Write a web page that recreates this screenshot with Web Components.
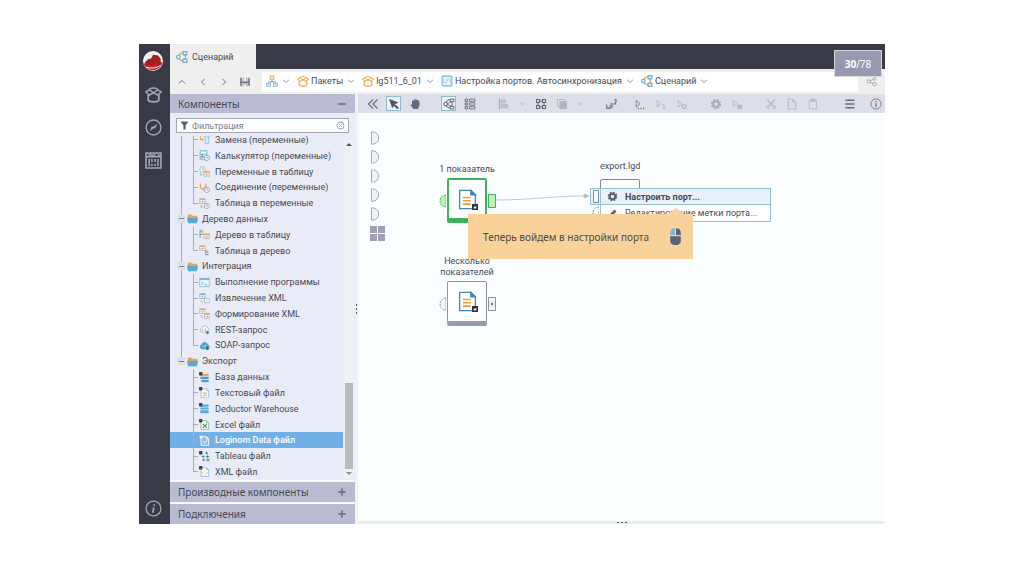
<!DOCTYPE html>
<html lang="ru">
<head>
<meta charset="utf-8">
<title>Сценарий</title>
<style>
  body { margin: 0; background: #fff; color: #484a52; font: 9px/12px Roboto, "Noto Sans", sans-serif; }
</style>
</head>
<body>
<scenario-app></scenario-app>
<script>
const BASE = `<style>
  * { box-sizing: border-box; }
  button { font: inherit; color: inherit; background: none; border: 0; padding: 0; margin: 0; display: grid; place-items: center; }
  a { color: inherit; text-decoration: none; }
</style>`;
function define(name, html, setup) {
  const tpl = document.createElement('template');
  tpl.innerHTML = BASE + html;
  customElements.define(name, class extends HTMLElement {
    static get observedAttributes() { return ['name']; }
    connectedCallback() {
      if (this.shadowRoot) return;
      this.attachShadow({ mode: 'open' }).append(tpl.content.cloneNode(true));
      if (setup) setup(this, this.shadowRoot);
    }
    attributeChangedCallback() {
      if (this.shadowRoot && setup) setup(this, this.shadowRoot);
    }
  });
}

/* ---------- icons, all on a 16 x 16 grid ---------- */
const B = '#6fb3dc', O = '#f0a54b', G = '#7d808c';
const clock = `<circle cx="11.500" cy="11.500" r="3.800" fill="#eef3fa" stroke="#7f93a8"/><path d="M11.500 9.500v2h1.500" stroke="#7f93a8"/>`;
const dot = `<rect x="0" y="0" width="5" height="5" rx="1" fill="#3f434d" stroke="none"/>`;
const doc = c => `<path d="M3 2.500h8l3 3v9.500H3z" fill="#fff" stroke="${c}"/><path d="M11 2.500v3h3" stroke="${c}"/>`;
const table = (x, y, c) => `<path d="M${x} ${y}h8v7h-8z" fill="#fff" stroke="#a9adb6"/><path d="M${x} ${y + 1}h8" stroke="${c}" stroke-width="2"/><path d="M${x} ${y + 4.5}h8M${x + 4} ${y + 2}v5" stroke="#a9adb6"/>`;
const play = '<path d="M3 3v9l5-4.500z"/>';
const ICONS = {
  up: '<path d="M3 10.500l5-5 5 5" stroke-width="1.600"/>',
  left: '<path d="M10.500 3l-5 5 5 5" stroke-width="1.600"/>',
  right: '<path d="M5.500 3l5 5-5 5" stroke-width="1.600"/>',
  down: '<path d="M2 5.500l6 5 6-5" stroke-width="1.800"/>',
  dleft: '<path d="M8 2L2 8l6 6M14 2L8 8l6 6" stroke-width="1.500"/>',
  save: '<path d="M1.500 1v13.500M14.500 1v13.500" stroke-width="2.400"/><path d="M1.500 8.500h13" stroke-width="2.600"/><path d="M5 1v6M11 1v6M4.500 15v-4h7v4" stroke-width="1"/>',
  tree: `<path d="M8 6v3M3.500 11V9h9v2" stroke="${G}"/><rect x="5.500" y="1" width="5" height="5" fill="#fbe2bd" stroke="${O}"/><rect x="1" y="11" width="5" height="4" fill="#cfe7f6" stroke="${B}"/><rect x="10" y="11" width="5" height="4" fill="#cfe7f6" stroke="${B}"/>`,
  pack: `<path d="M3 8.500v5c2 2 8 2 10 0v-5" stroke-width="1.700"/><path d="M8 6.500L4 3.500 .8 5.500 4 8.500zM8 6.500l4-3 3.200 2L12 8.500z" stroke-width="1.400"/><path d="M4 3c2-1.500 6-1.500 8 0" stroke-width="1.200"/>`,
  module: `<rect x="1.500" y="1.500" width="13" height="13" rx="2" fill="#eef7fc" stroke="${B}" stroke-width="1.500"/><path d="M10 4l-4 8M4 5v6M12 5v6" stroke="${B}"/>`,
  flow: `<path d="M4 6c1-3 3-3.500 5.500-3.500" stroke="${O}" stroke-width="1.700"/><path d="M4 10c1 2.500 3 3 5.500 3M12.500 5v6" stroke="${O}" stroke-width="1.700"/><circle cx="3.200" cy="8" r="2.300" fill="#fff" stroke="${B}" stroke-width="1.700"/><path d="M9.500 1h5v4h-5z" fill="#fff" stroke="${B}" stroke-width="1.700"/><path d="M9.500 11h5v4h-5z" fill="#fff" stroke="${B}" stroke-width="1.700"/>`,
  share: '<circle cx="4" cy="8" r="2.500"/><circle cx="12.500" cy="4" r="2"/><circle cx="12.500" cy="12" r="2.500"/><path d="M6 7l4.500-2M6 9l4.500 2"/>',
  compass: '<circle cx="8" cy="8" r="7" stroke-width="1.300"/><path d="M11.500 4.500l-2 5-2-2zM4.500 11.500l2-5 2 2z" fill="currentColor" stroke="none"/>',
  calc: '<path d="M1 1h14v14H1zM1 4.500h14" stroke-width="1.500"/><path d="M3 2.800h7M12 2.800h2M4 6.500v7M6.500 6.500v3M6.500 11v2.500M9.500 6.500v3M9.500 11v2.500M12.200 6.500v7" stroke-width="1.500"/>',
  info: '<circle cx="8" cy="8" r="7" stroke-width="1.200"/><path d="M8.800 4l-.3 1.500M8.300 7l-.9 5" stroke-width="1.700"/>',
  logo: '<circle cx="8" cy="8" r="8" fill="#f4f1f1" stroke="none"/><path d="M.3 10l15.400-1A8 8 0 0 1 .3 10z" fill="#c6282c" stroke="none"/><path d="M1.500 9L4 6.500 6.500 6 8 3l4 .5L14 6l.5 5-2.500 1-1-1.500-3 .5-1 1-2-1.500L2.500 12z" fill="#a81d22" stroke="none"/><path d="M2.500 13c4 1 8 1 11.500-1.500" stroke="#fff" stroke-width=".7"/>',
  pointer: '<path d="M2 2l11 4-4.500 2L14 13l-1.500 1.500L7.500 9.500 6 13z" fill="currentColor"/>',
  hand: '<path d="M4 8V4l1.500-1L7 4V2l1.500-.5L10 2.500l1.500-.5 1 1.500L14 5v5l-2 4.500H6L2 9.500z" fill="currentColor" stroke="none"/>',
  flowg: '<circle cx="3.500" cy="8" r="2.500" stroke-width="1.300"/><path d="M9.500 1.500h5V5h-5zM9.500 11h5v3.500h-5zM4.500 5.500c1-3 3-3.500 5-3M4.500 10.500c1 2.500 3 2.500 5 2.500M12 5v6M6 8c2-1 3-3 5-3M6 8c2 1 3 3 5 3" stroke-width="1.200"/>',
  list: '<path d="M1.500 1.500h3v3h-3zM7 1.500h7.500v3H7zM1.500 6.500h3v3h-3zM7 6.500h7.500v3H7zM1.500 11.500h3v3h-3zM7 11.500h7.500v3H7z" stroke-width="1.200"/>',
  align: '<path d="M2 1v14" stroke-width="1.500"/><path d="M4 2.500h6v4H4zM4 9h9v4H4z" fill="currentColor" fill-opacity=".4"/>',
  grid4: '<path d="M2 2h4v4H2zM10 2h4v4h-4zM2 10h4v4H2zM10 10h4v4h-4zM6 4h4M6 12h4M4 6v4M12 6v4" stroke-width="1.500"/>',
  layers: '<path d="M2 2h9v9H2z"/><path d="M5 5h9v9H5z" fill="currentColor" fill-opacity=".8"/>',
  sort: '<path d="M1 9v4.500h4.500V9M8 7v6.500M6.500 8L8 7M11 2.500h2.500V5L11 8h3" stroke-width="1.400"/>',
  run: play + '<path d="M5 14h1.500M8.500 14H10M12 14h1.500" stroke-width="1.800"/>',
  run1: play + '<path d="M10 9.500l2-1V14M10 14h4"/>',
  run2: play + '<circle cx="11" cy="11.500" r="2.500" stroke-width="1.500"/>',
  run3: play + '<path d="M9 10h5v4H9z" fill="currentColor" fill-opacity=".6"/>',
  gear: '<circle cx="8" cy="8" r="6" stroke-width="2" stroke-dasharray="2.700 2" /><circle cx="8" cy="8" r="4" stroke-width="3"/>',
  cut: '<path d="M3 2l8 9M13 2L5 11" stroke-width="1.400"/><circle cx="3.800" cy="12" r="2"/><circle cx="12.200" cy="12" r="2"/>',
  copy: '<path d="M3 1.500h6l4 4v9H3zM9 1.500v4h4"/>',
  paste: '<path d="M3 3h9.500v11.500H3zM5.500 1.500H10v3H5.500z"/>',
  menu: '<path d="M2 3h12M2 8h12M2 13h12" stroke-width="2"/>',
  infot: '<circle cx="8" cy="8" r="6.800"/><path d="M8 4v1.600M8 7v5" stroke-width="1.600"/>',
  filter: '<path d="M1 1h14L10 7.500V15H6V7.500z" fill="currentColor" stroke="none"/>',
  clear: '<circle cx="8" cy="8" r="6" stroke-width="1.800"/><path d="M5.500 5.500l5 5M10.500 5.500l-5 5" stroke-width="1.500"/>',
  minus: '<path d="M2 8h12" stroke-width="2.400"/>',
  plus: '<path d="M2 8h12M8 2v12" stroke-width="2.200"/>',
  folder: `<path d="M1 2h5l2 2h7v7H1z" fill="${O}" stroke="none"/><path d="M0 7h16l-1.500 8h-13z" fill="#5aa9dd" stroke="none"/>`,
  replace: `<path d="M2 3v5h4M4 6l2 2-2 2" stroke="${O}" stroke-width="1.500"/><path d="M8 3h7l-1.500 4v7H9V7z" fill="#dcebf7" stroke="${B}"/>`,
  calcv: `<path d="M1.500 1h10v13h-10z" fill="#b9dcee" stroke="${B}"/><path d="M3 3.500h7" stroke="#fff" stroke-width="2"/><path d="M3 7h3M3 10h3" stroke="#68798a" stroke-width="1.500"/>${clock}`,
  var2t: `<circle cx="5" cy="5" r="4" fill="#eef3fa" stroke="#8fb3cc"/><path d="M5 3v2h2" stroke="#8fb3cc"/>${table(7, 8, O)}<path d="M2 10v3h3" stroke="${B}"/>`,
  join: `<path d="M2 2v6l4 3h3M10 2v4L7 9" stroke="${O}" stroke-width="2"/>${clock}`,
  t2var: table(1, 1, O) + `<path d="M3 10v3h3" stroke="${O}" stroke-width="1.500"/>` + clock,
  tree2t: `<path d="M1.500 1v12M1.500 3h4M1.500 8h4" stroke="#8a95a0" stroke-width="1.500"/><path d="M5 2v4" stroke="#78b887" stroke-width="2"/>${table(7, 7, O)}`,
  t2tree: table(1, 1, O) + '<path d="M10 7v8M10 10h4M10 14h4" stroke="#8a95a0" stroke-width="1.500"/>',
  exec: `<path d="M1 2h14v12H1z" fill="#eaf4fb" stroke="${B}"/><path d="M1 3h14" stroke="${B}" stroke-width="2.500"/><path d="M4 7l2 2-2 2M8 11.500h4" stroke="#6d8496"/>`,
  xmlout: `${table(1, 1, B)}<path d="M8 8h7v6H8z" fill="#fff" stroke="${B}"/><path d="M3 10v3h3" stroke="${O}"/><path d="M10 11h3" stroke="${O}"/>`,
  xmlin: `${table(1, 1, O)}${table(8, 8, O)}<path d="M3 10v3h3" stroke="${B}"/>`,
  rest: `<path d="M4 12a3.500 3.500 0 0 1 0-6.500 4.500 4.500 0 0 1 8.500 0 3.500 3.500 0 0 1 0 6.500z" fill="#f4f8fb" stroke="#8ba9bd"/><path d="M6 7c-1 1-1 2 0 3.500M9.500 6v5" stroke="${O}" stroke-width="1.500"/><path d="M11 9v6l4-2z" fill="#4c5666" stroke="none"/>`,
  soap: `<path d="M4 13a3.500 3.500 0 0 1 0-6.500 4.500 4.500 0 0 1 8.500 0 3.500 3.500 0 0 1 0 6.500z" fill="#4d9ed2" stroke="#4d9ed2"/><path d="M5 10l2-2M8 11l2-4" stroke="#fff"/><path d="M11 9v6l4-2z" fill="#35516c" stroke="none"/>`,
  db: `<path d="M2 2.500h12v3.500H2z" fill="${O}" stroke="none"/><path d="M2 7h12v3.500H2zM3 11.500h11V15H4z" fill="#4f9fd6" stroke="none"/>${dot}`,
  txt: doc(B) + `<path d="M5.500 9h6M5.500 12h6" stroke="${O}" stroke-width="1.800"/>` + dot,
  dw: `<path d="M2 2h12v3.500H2zM2 6.500h12v3H2zM2 10.500h12V15H2z" fill="#58a9dd" stroke="none"/>${dot}`,
  xls: doc('#69b07f') + '<path d="M5.500 7l6 6M11.500 7l-6 6" stroke="#2f9a53" stroke-width="1.600"/>' + dot,
  lgd: '<path d="M3 2.500h8l3 3v9.500H3zM11 2.500v3h3" fill="#8cc0ea" stroke="#fff" stroke-width="1.300"/><path d="M6 9l2 3 4-5" stroke="#fff" stroke-width="1.300"/><path d="M1 1h4v4H1z" fill="#fff" stroke="none"/>',
  tableau: `<path d="M4 8h4M6 6v4M9 3h4M11 1v4M10 8h5M12.500 6v4M5 13h4M7 11v4" stroke="#4f86a8" stroke-width="1.500"/><path d="M11 11h4v4h-4z" fill="#65a98a" stroke="none"/>${dot}`,
  xml: doc(B) + `<path d="M7 8l-2 2 2 2M10 8l2 2-2 2" stroke="${O}" stroke-width="1.400"/>` + dot,
  nodedoc: '<path d="M2 1h8.500L14 4.500V15H2z" fill="#fff" stroke="#3f86c4" stroke-width="1"/><path d="M10.500 1v3.500H14z" fill="#3f86c4" stroke="#3f86c4"/><path d="M4.500 6.500h6M4.500 9h6M4.500 11.500h6" stroke="#f09a36" stroke-width="1.200"/>',
  mark: '<path d="M0 0h16v16H0z" fill="#2c3440" stroke="none"/><path d="M4.500 8v4h7V5z" fill="#e8ecf0" stroke="none"/>',
  pencil: '<path d="M2 14l2-5 7-7 3 3-7 7z" fill="currentColor" stroke="none"/>',
  mouse: '<path d="M7.400 0v6.500H3V5a5 5 0 0 1 4.400-5z" fill="#7fb6d8" stroke="none"/><path d="M8.600 0A5 5 0 0 1 13 5v1.500H8.600zM3 7.700h10V12a4 4 0 0 1-4 4H7a4 4 0 0 1-4-4z" fill="#5d6176" stroke="none"/>'
};
define('ui-icon', `<style>:host { display: inline-block; width: 11px; height: 11px; flex: none; } svg { display: block; width: 100%; height: 100%; }</style>
  <svg viewBox="0 0 16 16" fill="none" stroke="currentColor" aria-hidden="true"></svg>`,
  (el, root) => { root.querySelector('svg').innerHTML = ICONS[el.getAttribute('name')] || ''; });

/* ---------- left rail ---------- */
define('side-rail', `<style>
  :host { display: flex; flex-direction: column; align-items: center; gap: 13px; padding: 7px 3px 6px 0; background: #383a45; color: #a3a6b2; }
  button { width: 20px; height: 20px; }
  ui-icon { width: 17px; height: 17px; }
  .logo { width: 20px; height: 20px; }
  .last { margin-top: auto; }
</style>
<button aria-label="Меню"><ui-icon class="logo" name="logo"></ui-icon></button>
<button aria-label="Пакеты"><ui-icon name="pack"></ui-icon></button>
<button aria-label="Навигация"><ui-icon name="compass"></ui-icon></button>
<button aria-label="Процессы"><ui-icon name="calc"></ui-icon></button>
<button class="last" aria-label="О программе"><ui-icon name="info"></ui-icon></button>`);

/* ---------- tab strip ---------- */
define('tab-strip', `<style>
  :host { display: flex; height: 25px; background: #383a45; font: 9px/12px Roboto, "Noto Sans", sans-serif; }
  button { display: flex; align-items: center; gap: 4px; width: 86px; padding-left: 6px; background: #efeff0; }
  ui-icon { width: 12px; height: 12px; }
</style><button><ui-icon name="flow"></ui-icon>Сценарий</button>`);

/* ---------- breadcrumbs ---------- */
define('crumb-item', `<style>
  :host { display: flex; align-items: center; gap: 4px; color: #484a52; }
  .chev { width: 8px; height: 8px; color: #8a8d96; }
  a { display: flex; align-items: center; gap: 2px; white-space: nowrap; }
  .ic { width: 12px; height: 12px; color: #f0a54b; }
</style><a href="#"><ui-icon class="ic"></ui-icon><slot></slot></a><ui-icon class="chev" name="down"></ui-icon>`,
  (el, root) => root.querySelector('.ic').setAttribute('name', el.getAttribute('icon')));
define('crumb-bar', `<style>
  :host { display: flex; align-items: center; height: 25px; background: #efeff0; color: #70737d; }
  .nav { display: flex; gap: 10px; padding-left: 6px; width: 92px; }
  .nav ui-icon { width: 10px; height: 10px; }
  .nav button { height: 12px; width: 11px; }
  nav { flex: 1; min-width: 0; display: flex; align-items: center; gap: 7px; height: 20px; padding: 0 0 2px 4px; background: #fff; }
  .share { width: 27px; color: #8f929c; }
</style>
<div class="nav"><button aria-label="Вверх"><ui-icon name="up"></ui-icon></button><button aria-label="Назад"><ui-icon name="left"></ui-icon></button><button aria-label="Вперёд"><ui-icon name="right"></ui-icon></button><button aria-label="Сохранить"><ui-icon name="save"></ui-icon></button></div>
<nav><crumb-item icon="tree"></crumb-item><crumb-item icon="pack">Пакеты</crumb-item><crumb-item icon="pack">lg511_6_01</crumb-item><crumb-item icon="module">Настройка портов. Автосинхронизация</crumb-item><crumb-item icon="flow">Сценарий</crumb-item></nav>
<button class="share" aria-label="Поделиться"><ui-icon name="share"></ui-icon></button>`);

/* ---------- component tree ---------- */
define('tree-group', `<style>
  :host { flex: 1; min-height: 0; display: flex; align-items: center; padding-left: 7px; white-space: nowrap;
    background: linear-gradient(#a9adb8, #a9adb8) 11px 0 / 1px var(--line, 100%) no-repeat; }
  .box { width: 8px; height: 8px; background: #dde0ea; color: #7d818d; margin-right: 2px; }
  .box ui-icon { width: 7px; height: 7px; }
  .folder { margin-right: 4px; }
</style><button class="box" aria-label="Свернуть"><ui-icon name="minus"></ui-icon></button><ui-icon class="folder" name="folder"></ui-icon><slot></slot>`);
define('tree-leaf', `<style>
  :host { flex: 1; min-height: 0; display: flex; align-items: center; gap: 5px; padding-left: 29px; white-space: nowrap;
    background: linear-gradient(#a9adb8, #a9adb8) 11px 0 / var(--outer, 1px) 100% no-repeat,
      linear-gradient(#a9adb8, #a9adb8) 23px 0 / 1px var(--line, 100%) no-repeat,
      linear-gradient(#a9adb8, #a9adb8) 23px 50% / 5px 1px no-repeat, var(--row, transparent); }
  :host([last]) { --line: 50%; }
  :host([tail]) { --outer: 0; }
  :host([selected]) { --row: #70b0e6; color: #fff; font-weight: 500; }
</style><ui-icon></ui-icon><slot></slot>`,
  (el, root) => root.querySelector('ui-icon').setAttribute('name', el.getAttribute('icon')));
define('component-panel', `<style>
  :host { display: flex; flex-direction: column; background: #e9ecf6; font: 9px/12px Roboto, "Noto Sans", sans-serif; }
  .head { display: flex; align-items: center; justify-content: space-between; padding: 0 8px; height: 20px; background: #b9bcd1;
    font: 10px/14px "Noto Sans", sans-serif; color: #464955; }
  .head ui-icon { width: 10px; height: 10px; color: #666977; }
  .head.top { height: 19px; }
  .filter { display: flex; align-items: center; gap: 3px; height: 15px; margin: 5px 6px 3px 6px; padding: 0 3px; background: #fff; border: 1px solid #a3a7b5; color: #5b5e69; }
  .filter ui-icon { width: 9px; height: 9px; }
  .filter button { color: #a5a8b2; }
  input { flex: 1; min-width: 0; border: 0; padding: 0; outline: 0; background: none; font: inherit; color: inherit; }
  input::placeholder { color: #7b7e88; opacity: 1; }
  .body { flex: 1; min-height: 0; display: flex; overflow: hidden; }
  .rows { flex: 1; min-width: 0; display: flex; flex-direction: column; margin-top: -4px; }
  .bar { width: 10px; margin: 4px 1px 2px; display: grid; grid-template-rows: 9px 1fr 86px 9px; justify-items: center; background: #eff1f5; }
  .thumb { width: 8px; background: #bababd; }
  .tri { width: 0; height: 0; align-self: center; border: 3px solid transparent; border-top-width: 0; border-bottom-color: #55575f; }
  .tri.d { border-width: 3px 3px 0; border-color: #8b8d95 transparent; }
  .foot { display: grid; gap: 2px; padding-top: 2px; background: #f7f8fb; }
</style>
<div class="head top"><span>Компоненты</span><button aria-label="Свернуть"><ui-icon name="minus"></ui-icon></button></div>
<div class="filter"><ui-icon name="filter"></ui-icon><input aria-label="Фильтрация" placeholder="Фильтрация"><button aria-label="Очистить"><ui-icon name="clear"></ui-icon></button></div>
<div class="body"><div class="rows">
  <tree-leaf icon="replace">Замена (переменные)</tree-leaf>
  <tree-leaf icon="calcv">Калькулятор (переменные)</tree-leaf>
  <tree-leaf icon="var2t">Переменные в таблицу</tree-leaf>
  <tree-leaf icon="join">Соединение (переменные)</tree-leaf>
  <tree-leaf icon="t2var" last>Таблица в переменные</tree-leaf>
  <tree-group>Дерево данных</tree-group>
  <tree-leaf icon="tree2t">Дерево в таблицу</tree-leaf>
  <tree-leaf icon="t2tree" last>Таблица в дерево</tree-leaf>
  <tree-group>Интеграция</tree-group>
  <tree-leaf icon="exec">Выполнение программы</tree-leaf>
  <tree-leaf icon="xmlout">Извлечение XML</tree-leaf>
  <tree-leaf icon="xmlin">Формирование XML</tree-leaf>
  <tree-leaf icon="rest">REST-запрос</tree-leaf>
  <tree-leaf icon="soap" last>SOAP-запрос</tree-leaf>
  <tree-group style="--line: 50%">Экспорт</tree-group>
  <tree-leaf icon="db" tail>База данных</tree-leaf>
  <tree-leaf icon="txt" tail>Текстовый файл</tree-leaf>
  <tree-leaf icon="dw" tail>Deductor Warehouse</tree-leaf>
  <tree-leaf icon="xls" tail>Excel файл</tree-leaf>
  <tree-leaf icon="lgd" tail selected>Loginom Data файл</tree-leaf>
  <tree-leaf icon="tableau" tail>Tableau файл</tree-leaf>
  <tree-leaf icon="xml" tail last>XML файл</tree-leaf>
</div><div class="bar"><div class="tri"></div><i></i><div class="thumb"></div><div class="tri d"></div></div></div>
<div class="foot">
  <div class="head"><span>Производные компоненты</span><button aria-label="Развернуть"><ui-icon name="plus"></ui-icon></button></div>
  <div class="head"><span>Подключения</span><button aria-label="Развернуть"><ui-icon name="plus"></ui-icon></button></div>
</div>`);

/* ---------- toolbar ---------- */
define('tool-button', `<style>
  :host { display: block; color: #666a78; }
  button { width: 15px; height: 15px; }
  ui-icon { width: 12px; height: 12px; }
  :host([off]) { color: #a9adb8; }
  :host([on]) button { background: #edf5fa; border: 1px solid #8fbcc8; }
  :host([on]) { color: #505463; }
  :host([icon="down"]) button { width: 10px; }
  :host([icon="down"]) ui-icon { width: 7px; height: 7px; }
</style><button><ui-icon></ui-icon></button>`,
  (el, root) => {
    root.querySelector('ui-icon').setAttribute('name', el.getAttribute('icon'));
    root.querySelector('button').setAttribute('aria-label', el.getAttribute('icon'));
  });
define('tool-bar', `<style>
  :host { display: flex; align-items: center; gap: 19px; height: 19px; padding: 0 2px 0 7px; background: #dddfe8; }
  div { display: flex; gap: 6px; }
  .near { margin-left: -6px; }
  .end { margin-left: auto; gap: 11px; }
</style>
<div><tool-button icon="dleft"></tool-button><tool-button icon="pointer" on></tool-button><tool-button icon="hand"></tool-button></div>
<div><tool-button icon="flowg" on></tool-button><tool-button icon="list"></tool-button></div>
<div><tool-button icon="align" off></tool-button><tool-button icon="down" off></tool-button><tool-button icon="grid4"></tool-button><tool-button icon="layers" off></tool-button><tool-button icon="down" off></tool-button></div>
<div><tool-button icon="sort"></tool-button></div>
<div class="near"><tool-button icon="run"></tool-button><tool-button icon="run1" off></tool-button><tool-button icon="run2" off></tool-button></div>
<div><tool-button icon="gear" off></tool-button><tool-button icon="run3" off></tool-button></div>
<div><tool-button icon="cut" off></tool-button><tool-button icon="copy" off></tool-button><tool-button icon="paste" off></tool-button></div>
<div class="end"><tool-button icon="menu"></tool-button><tool-button icon="infot"></tool-button></div>`);

/* ---------- workflow canvas ---------- */
define('flow-node', `<style>
  :host { --edge: #9a9aae; --line: #8f929f; display: grid; justify-items: center; gap: 3px; width: 60px; text-align: center; line-height: 11px; }
  :host([state="ok"]) { --edge: #3cb35a; --line: #3cb35a; }
  .row { display: grid; grid-template-columns: 8px 40px 8px; gap: 1px; align-items: center; }
  .box { height: 45px; border: 1px solid var(--line); border-bottom: 5px solid var(--edge); border-radius: 2px; background: #fff; display: grid; place-items: center; }
  :host([state="ok"]) .box { border-width: 2px 2px 5px; }
  .pic { display: grid; place-items: end; }
  .pic > * { grid-area: 1 / 1; }
  .pic ui-icon { width: 21px; height: 21px; }
  .pic .mark { width: 6px; height: 6px; }
  svg { display: block; width: 8px; height: 14px; }
</style>
<slot></slot>
<div class="row">
  <svg viewBox="0 0 8 14"><path d="M8 1a6 6 0 0 0 0 12z" fill="var(--in, #f4f6f8)" stroke="var(--line)" stroke-dasharray="2 1"/></svg>
  <div class="box"><div class="pic"><ui-icon name="nodedoc"></ui-icon><ui-icon class="mark" name="mark"></ui-icon></div></div>
  <svg viewBox="0 0 8 14"><path d="M.5.5h7v13h-7z" fill="var(--in, #f4f6f8)" stroke="var(--line)"/><circle cx="4" cy="7" r="1.300" fill="var(--pin, #777b88)"/></svg>
</div>`,
  (el) => { if (el.getAttribute('state') === 'ok') { el.style.setProperty('--in', '#b9f2b4'); el.style.setProperty('--pin', 'none'); } });
define('port-menu', `<style>
  :host { display: grid; grid-template-columns: 10px 1fr; color: #484a52; }
  .port { height: 17px; background: #e6effa; border: 1px solid #93c2cf; border-right: 0; display: grid; place-items: center; }
  .port i { width: 6px; height: 13px; background: #f4f4fa; border: 1px solid #8a8da0; }
  .items { border: 1px solid #93c2cf; background: #fff; }
  button { display: grid; grid-template-columns: 22px 1fr; justify-items: center; width: 100%; height: 16px; }
  button span { justify-self: start; padding-left: 2px; white-space: nowrap; }
  .cur { background: #e9f0fa; border-bottom: 1px solid #93c2cf; font-weight: 700; }
  ui-icon { color: #5b5f70; }
</style>
<div class="port"><i></i></div>
<div class="items"><button class="cur"><ui-icon name="gear"></ui-icon><span>Настроить порт...</span></button><button><ui-icon name="pencil"></ui-icon><span>Редактирование метки порта...</span></button></div>`);
define('hint-box', `<style>
  :host { display: flex; align-items: center; justify-content: space-between; padding: 0 9px 0 15px; background: #f9d29b; font: 10px/14px "Noto Sans", sans-serif; color: #4d4a47; white-space: nowrap; }
  ui-icon { width: 17px; height: 17px; }
  .tip { position: absolute; right: 9px; bottom: 100%; border: 8px solid transparent; border-top: 0; border-bottom: 6px solid #f9d29b; }
</style><slot></slot><ui-icon name="mouse"></ui-icon><i class="tip"></i>`);
define('flow-canvas', `<style>
  :host { display: block; position: relative; overflow: hidden; background: #fafeff; }
  .ports { display: grid; gap: 5px; padding: 18px 0 0 12px; justify-items: start; }
  .ports svg { display: block; width: 10px; height: 14px; }
  .ports .tiles { width: 15px; height: 15px; }
  .item { position: absolute; }
  .link { left: 138px; top: 76px; width: 98px; height: 16px; }
  .a { left: 79px; top: 51px; } .b { left: 79px; top: 143px; }
  .target { left: 242px; top: 47px; display: grid; gap: 7px; }
  .target i { width: 40px; height: 36px; border: 1px solid #7f8596; border-radius: 2px; background: #fff; }
  .half { left: 234px; top: 93px; width: 7px; height: 14px; }
  .menu { left: 232px; top: 75px; width: 181px; }
  .hint { left: 110px; top: 101px; width: 225px; height: 45px; }
</style>
<div class="ports"></div>
<svg class="item link" viewBox="0 0 98 16" fill="none" stroke="#c3c6cd"><path d="M0 11C35 11 55 7 90 7"/><path d="M88 5l5 2-5 2z" fill="#b5b8c0"/></svg>
<flow-node class="item a" state="ok">1 показатель</flow-node>
<flow-node class="item b">Несколько показателей</flow-node>
<div class="item target"><span>export.lgd</span><i></i></div>
<svg class="item half" viewBox="0 0 7 14"><path d="M7 1a6 6 0 0 0 0 12z" fill="#fff" stroke="#7f8596" stroke-dasharray="2 1"/></svg>
<port-menu class="item menu"></port-menu>
<hint-box class="item hint">Теперь войдем в настройки порта</hint-box>`,
  (el, root) => {
    const half = '<svg viewBox="0 0 10 14"><path d="M1.500.8v12.400h1A6 6 0 0 0 2.500.8z" fill="#f1f2f4" stroke="#a6a8b0"/></svg>';
    root.querySelector('.ports').innerHTML = half.repeat(5) +
      '<svg class="tiles" viewBox="0 0 15 15" fill="#a0a1b5"><path d="M0 0h7v7H0zM8 0h7v7H8zM0 8h7v7H0zM8 8h7v7H8z"/></svg>';
  });

/* ---------- shell ---------- */
define('page-counter', `<style>
  :host { display: grid; place-items: center; background: #9799ae; border: 1px solid #d5d6df; color: #fff; font: 10px/14px "Noto Sans", sans-serif; }
</style><span><b>30</b>/78</span>`);
define('scenario-app', `<style>
  :host { display: grid; grid-template-columns: 31px minmax(0, 1fr); position: relative; min-height: calc(100vh - 94px); margin: 44px 139px 50px; }
  main { display: grid; grid-template-rows: auto auto 1fr; min-width: 0; }
  .work { display: grid; grid-template-columns: 185px 3px minmax(0, 1fr); min-height: 0; }
  .split { display: grid; place-items: center; background: #f1f2f6; }
  .split svg { width: 3px; height: 10px; }
  .area { display: grid; grid-template-rows: auto 1fr 3px; min-width: 0; }
  .grip { display: grid; place-items: center; background: #e9edf0; }
  .grip svg { width: 10px; height: 3px; }
  page-counter { position: absolute; right: 3px; top: 6px; width: 48px; height: 27px; }
</style>
<side-rail></side-rail>
<main>
  <tab-strip></tab-strip>
  <crumb-bar></crumb-bar>
  <div class="work">
    <component-panel></component-panel>
    <div class="split"><svg viewBox="0 0 3 10" fill="#5b5e69"><path d="M1 0h1v2H1zM1 4h1v2H1zM1 8h1v2H1z"/></svg></div>
    <div class="area"><tool-bar></tool-bar><flow-canvas></flow-canvas><div class="grip"><svg viewBox="0 0 10 3" fill="#5b5e69"><path d="M0 1h2v1H0zM4 1h2v1H4zM8 1h2v1H8z"/></svg></div></div>
  </div>
</main>
<page-counter></page-counter>`);
</script>
</body>
</html>
